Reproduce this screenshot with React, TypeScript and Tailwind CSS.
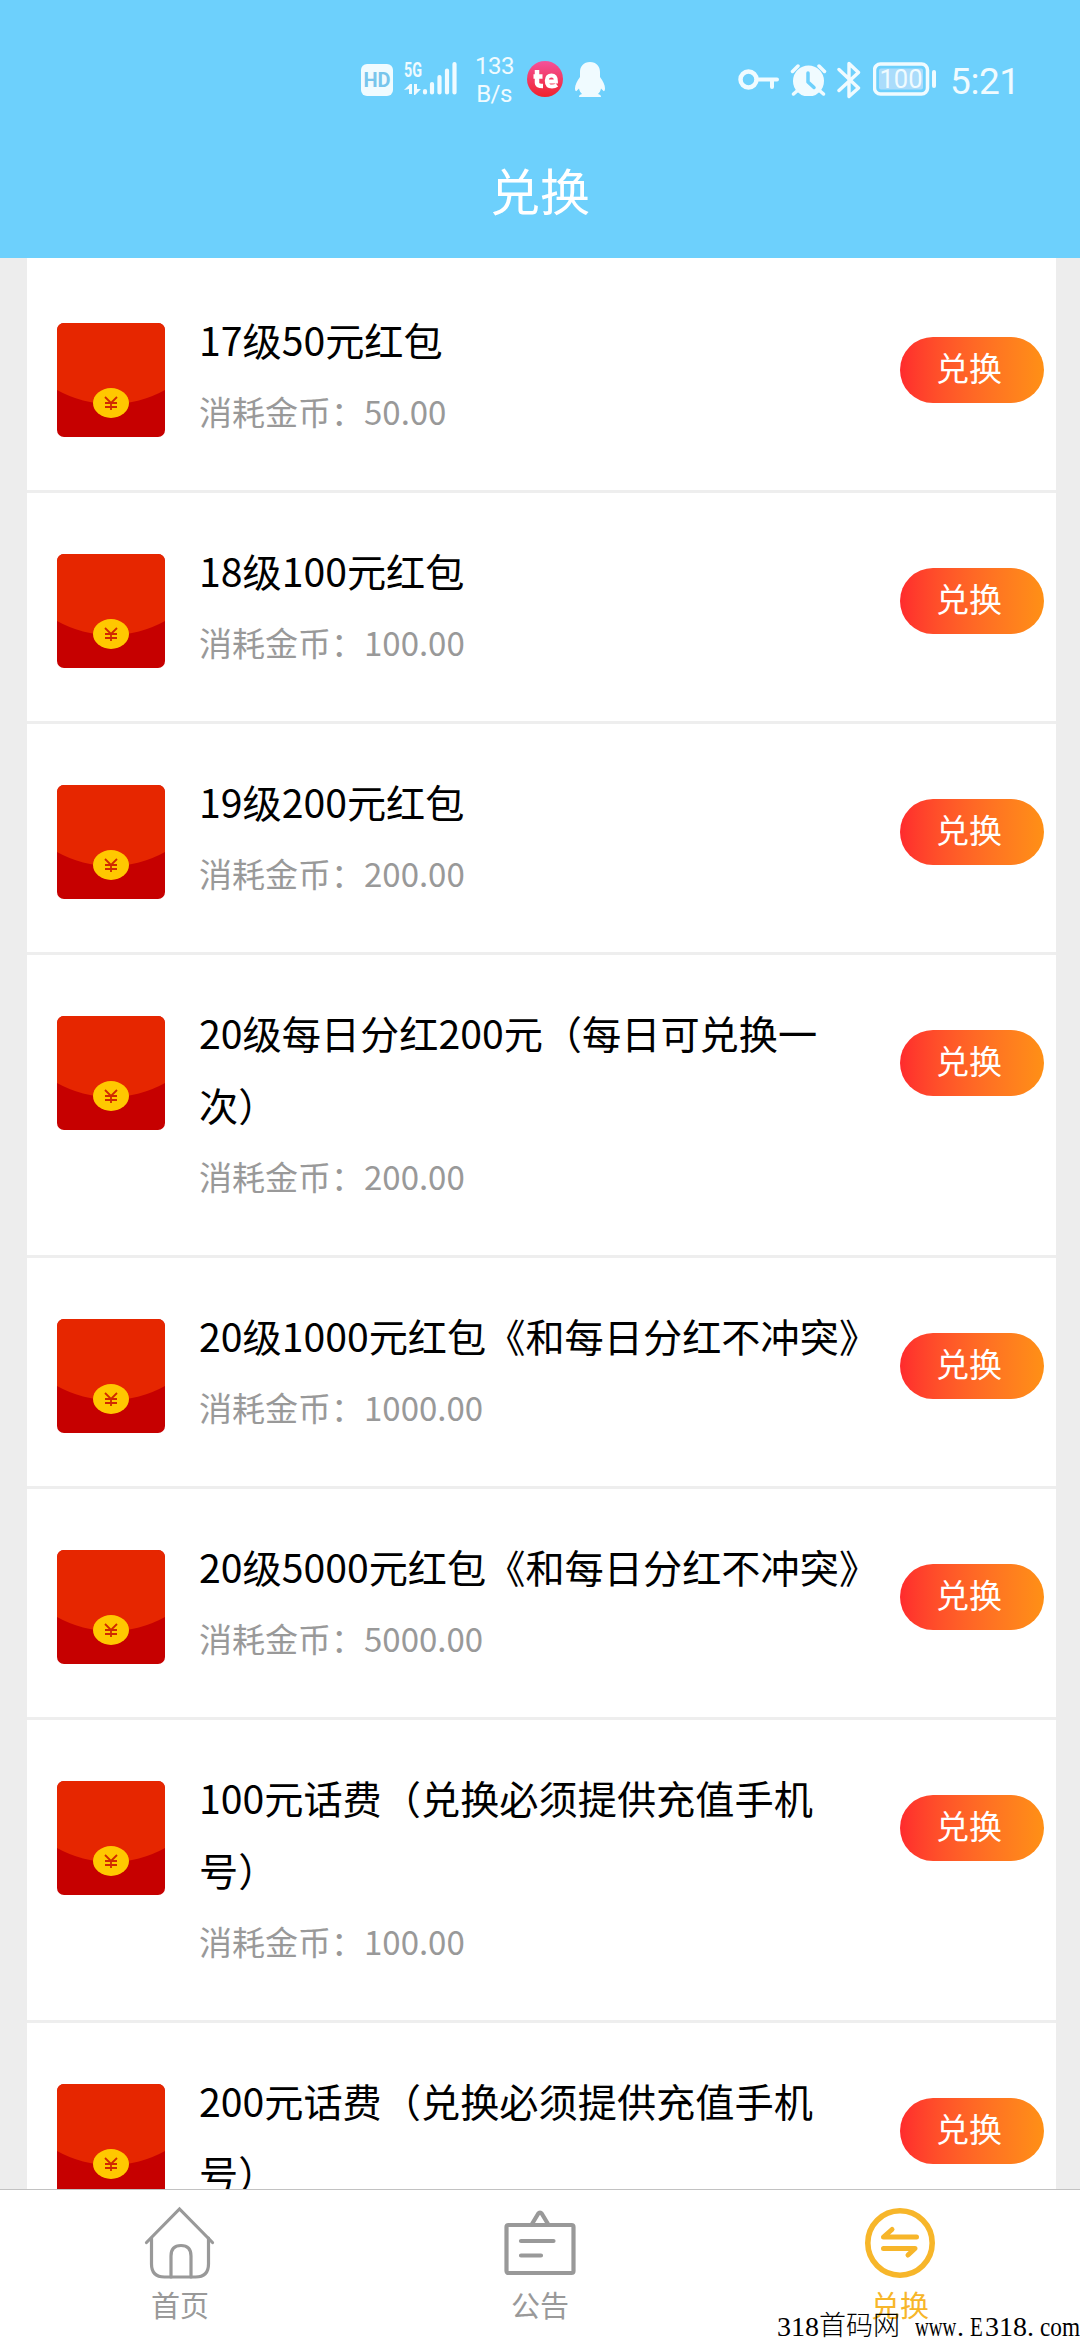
import React, { useState } from 'react';

interface Reward {
  id: number;
  title: string;
  cost: string;
}

const rewards: Reward[] = [
  { id: 1, title: '17级50元红包', cost: '50.00' },
  { id: 2, title: '18级100元红包', cost: '100.00' },
  { id: 3, title: '19级200元红包', cost: '200.00' },
  { id: 4, title: '20级每日分红200元（每日可兑换一次）', cost: '200.00' },
  { id: 5, title: '20级1000元红包《和每日分红不冲突》', cost: '1000.00' },
  { id: 6, title: '20级5000元红包《和每日分红不冲突》', cost: '5000.00' },
  { id: 7, title: '100元话费（兑换必须提供充值手机号）', cost: '100.00' },
  { id: 8, title: '200元话费（兑换必须提供充值手机号）', cost: '200.00' },
];

const SignalIcon = () => (
  <svg width="54" height="36" viewBox="0 0 54 36" fill="currentColor">
    <text x="0" y="15.500" fontSize="20" fontWeight="700" textLength="18" lengthAdjust="spacingAndGlyphs" fontFamily="Roboto, sans-serif">5G</text>
    <path d="M0 29l6-6h2v10H5v-5zM10 23h3v5h4l-6 6h-1z" />
    <g stroke="currentColor" strokeWidth="4.200" strokeLinecap="round">
      <path d="M21 30v1.500M28 23v8.500M35.500 16v15.500M43 9.500v22M50.500 3v28.500" />
    </g>
  </svg>
);

const AppBadge = () => (
  <svg width="36" height="36" viewBox="0 0 36 36">
    <defs>
      <linearGradient id="badge" x1="0" y1="0" x2="0" y2="1">
        <stop offset="0" stopColor="#f4529b" />
        <stop offset="1" stopColor="#f0222c" />
      </linearGradient>
    </defs>
    <circle cx="18" cy="18" r="18" fill="url(#badge)" />
    <g fill="none" stroke="#fff" strokeWidth="4.500">
      <path d="M10 9v13q0 3 6 3M6.500 15.500h9" />
      <path d="M20.500 20.500h8.500q0-6-4.500-6t-4.800 5.200q0 5.800 5.300 5.800q3 0 5-1.500" strokeWidth="3.800" />
    </g>
  </svg>
);

const PenguinIcon = () => (
  <svg width="30" height="36" viewBox="0 0 30 36" fill="currentColor">
    <path d="M15 0c-6.500 0-10 4.500-10 10v5C2 19 0 23 0 26.500c0 2 .8 3 1.500 2.500L4 26.500c.5 2.500 1.500 4 3 5.500-2 .5-3 1.300-3 3h22c0-1.700-1-2.500-3-3 1.500-1.500 2.500-3 3-5.500l2.500 2.500c.7.500 1.500-.5 1.500-2.500 0-3.500-2-7.500-5-11.500v-5C25 4.500 21.500 0 15 0z" />
  </svg>
);

const KeyIcon = () => (
  <svg width="42" height="22" viewBox="0 0 42 22" fill="none" stroke="currentColor" strokeWidth="4" strokeLinecap="round">
    <circle cx="10.500" cy="10.500" r="8" strokeWidth="4.500" />
    <path d="M19 10.500h20M34 11v7" />
  </svg>
);

const AlarmIcon = () => (
  <svg width="37" height="32" viewBox="0 0 37 32" fill="none" stroke="currentColor" strokeLinecap="round" strokeLinejoin="round">
    <circle cx="18.500" cy="17" r="15.500" fill="currentColor" stroke="none" />
    <path d="M2.500 7.500L8 2M34.500 7.500L29 2M7 27l-3.500 3M30 27l3.500 3" strokeWidth="3.500" />
    <path d="M18 9v9l6 5.500" stroke="#6dd0fc" strokeWidth="3.500" />
  </svg>
);

const BluetoothIcon = () => (
  <svg width="24" height="38" viewBox="0 0 24 38" fill="none" stroke="currentColor" strokeWidth="3.400" strokeLinecap="round" strokeLinejoin="round">
    <path d="M2 8.500L21.500 27 12 35.500V2.500l9.500 9L2 29.500" />
  </svg>
);

const BatteryIcon = () => (
  <svg width="64" height="34" viewBox="0 0 64 34" fill="none" stroke="currentColor">
    <rect x="1.500" y="2" width="53" height="30" rx="6" strokeWidth="3.500" />
    <rect x="6" y="6.500" width="44" height="21" rx="2" fill="#aadcfb" stroke="none" />
    <path d="M61 10v14" strokeWidth="4" strokeLinecap="round" />
    <text x="28" y="26" textAnchor="middle" fontSize="26" fill="currentColor" stroke="none" textLength="43" lengthAdjust="spacingAndGlyphs" fontFamily="Roboto, sans-serif">100</text>
  </svg>
);

const StatusBar = () => (
  <div className="flex h-[114px] items-start pt-[61px] pl-[361px] font-['Roboto',sans-serif] text-[#f0fbff]">
    <div className="mt-[3px] flex h-8 w-8 items-center justify-center rounded-[6px] bg-[#f0fbff] text-[20px] leading-none font-bold text-[#78c5ec]">
      HD
    </div>
    <div className="ml-[11px]">
      <SignalIcon />
    </div>
    <div className="-mt-[9px] ml-[17px] w-[38px] text-center text-[24px] leading-7 tracking-[-0.5px]">
      133
      <br />
      B/s
    </div>
    <div className="ml-[14px]">
      <AppBadge />
    </div>
    <div className="mt-px ml-3">
      <PenguinIcon />
    </div>
    <div className="mt-2 ml-[133px]">
      <KeyIcon />
    </div>
    <div className="mt-[3px] ml-[10px]">
      <AlarmIcon />
    </div>
    <div className="ml-[10px]">
      <BluetoothIcon />
    </div>
    <div className="mt-px ml-[12px]">
      <BatteryIcon />
    </div>
    <div className="mt-[3px] ml-[13px] text-[37px] leading-[36px] tracking-[-0.4px]">5:21</div>
  </div>
);

const RedPacket = () => (
  <svg className="mt-5 shrink-0" width="108" height="114" viewBox="0 0 108 114">
    <defs>
      <clipPath id="packet">
        <rect width="108" height="114" rx="7" />
      </clipPath>
    </defs>
    <g clipPath="url(#packet)">
      <rect width="108" height="114" fill="#c60000" />
      <path d="M0 0h108v67A111 111 0 0 1 0 67z" fill="#e62600" />
    </g>
    <ellipse cx="54" cy="80" rx="18" ry="15" fill="#ffc800" />
    <path d="M48 74l6 6 6-6M54 80v7M48 80h12M48 84h12" fill="none" stroke="#d02a00" strokeWidth="1.800" />
  </svg>
);

const RewardRow: React.FC<{ reward: Reward }> = ({ reward }) => (
  <div className="flex items-start border-b-3 border-[#eeeeee] pt-[41px] pr-3 pb-[43px] pl-[30px]">
    <RedPacket />
    <div className="ml-[34px] w-[684px] [text-spacing-trim:space-all]">
      <h3 className="text-[39.2px] leading-[72px] text-black">{reward.title}</h3>
      <p className="text-[33px] leading-[72px] text-[#999999]">消耗金币：{reward.cost}</p>
    </div>
    <button className="mt-[34px] ml-auto h-[66px] w-36 rounded-full bg-linear-to-r from-[#ff2a2d] to-[#ff9015] pr-[6px] pb-[6px] text-[33px] leading-[60px] text-white">
      兑换
    </button>
  </div>
);

const HomeIcon = () => (
  <svg width="72" height="74" viewBox="0 0 72 74" fill="none" stroke="currentColor" strokeWidth="3.200" strokeLinecap="round">
    <path d="M2.500 36.500L35.500 3l33 33.500" />
    <path d="M7.500 32v26q0 13 13 13h31q13 0 13-13V32" />
    <path d="M27 71V50q0-10.500 10-10.500T47 50v21" />
  </svg>
);

const NoticeIcon = () => (
  <svg width="72" height="74" viewBox="0 0 72 74" fill="none" stroke="currentColor" strokeWidth="4.200" strokeLinecap="round" strokeLinejoin="round">
    <rect x="2.500" y="19" width="67" height="48" rx="2" />
    <path d="M28 18l6-10q2-3 4 0l6 10M17 35h32.500M17 49.500h20" />
  </svg>
);

const ExchangeIcon = () => (
  <svg width="72" height="74" viewBox="0 0 72 74" fill="none" stroke="currentColor" strokeLinecap="round" strokeLinejoin="round">
    <circle cx="36" cy="37" r="32.200" strokeWidth="5.600" />
    <path d="M52.500 31H19.500l8.500-7.500M19.500 42.500H51l-7 6.500" strokeWidth="5" />
  </svg>
);

const tabs = [
  { key: 'home', label: '首页', icon: <HomeIcon /> },
  { key: 'notice', label: '公告', icon: <NoticeIcon /> },
  { key: 'exchange', label: '兑换', icon: <ExchangeIcon /> },
];

const Watermark = () => (
  <div className="absolute right-0 bottom-0 flex h-[27px] w-[303px] items-center font-['Liberation_Serif','Noto_Sans_CJK_SC',serif] text-[28px] leading-[27px] whitespace-nowrap text-black">
    <span className="w-[42px]">318</span>
    <span className="w-[96px] text-[27px] font-light">首码网</span>
    <span className="w-[42px]">
      <span className="inline-block origin-left scale-x-[0.68]">www</span>
    </span>
    <span className="w-[13px]">.</span>
    <span className="w-[15px]">
      <span className="inline-block origin-left scale-x-[0.75]">E</span>
    </span>
    <span className="w-[42px]">318</span>
    <span className="w-[13px]">.</span>
    <span className="w-[40px]">
      <span className="inline-block origin-left scale-x-[0.83]">com</span>
    </span>
  </div>
);

const App: React.FC = () => {
  const [activeTab, setActiveTab] = useState('exchange');

  return (
    <div className="relative flex h-[2340px] w-[1080px] flex-col overflow-hidden bg-[#ededed] font-['Noto_Sans_CJK_SC',sans-serif]">
      <header className="h-[258px] shrink-0 bg-[#6dd0fc]">
        <StatusBar />
        <h1 className="text-center text-[50px] leading-[150px] text-white">兑换</h1>
      </header>

      <main className="mr-6 ml-[27px] min-h-0 flex-1 overflow-hidden bg-white pt-1">
        {rewards.map((reward) => (
          <RewardRow key={reward.id} reward={reward} />
        ))}
      </main>

      <nav className="flex h-[151px] shrink-0 border-t border-[#c2c2c2] bg-white">
        {tabs.map((tab) => (
          <button
            key={tab.key}
            onClick={() => setActiveTab(tab.key)}
            className={`flex flex-1 flex-col items-center pt-4 ${
              activeTab === tab.key ? 'text-[#f7b62a]' : 'text-[#999999]'
            }`}
          >
            {tab.icon}
            <span className="mt-[3px] text-[29px] leading-[42px]">{tab.label}</span>
          </button>
        ))}
      </nav>

      <Watermark />
    </div>
  );
};

export default App;
